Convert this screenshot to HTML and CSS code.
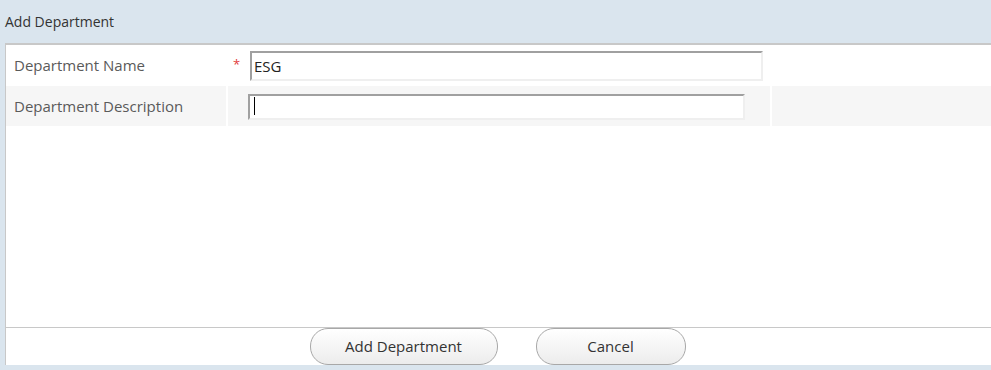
FILE: index.html
```html
<!DOCTYPE html>
<html>
<head>
  <meta charset="utf-8">
  <title>Add Department</title>
  <link rel="stylesheet" href="styles.css">
</head>
<body>
  <div class="dlg">
    <div class="dlg-title">Add Department</div>
    <div class="dlg-panel">
      <div class="frow row-a">
        <div class="lbl">Department Name</div>
        <div class="req">*</div>
        <div class="fld"><input type="text" class="txt txt-name" value="ESG"></div>
      </div>
      <div class="frow row-b">
        <div class="lbl">Department Description</div>
        <div class="fld"><input type="text" class="txt txt-desc"><span class="caret"></span></div>
        <div class="rest"></div>
      </div>
      <div class="spacer"></div>
      <div class="dlg-foot">
        <button class="pill pill-add">Add Department</button>
        <button class="pill pill-cancel">Cancel</button>
      </div>
    </div>
  </div>
</body>
</html>
```

FILE: styles.css
```css
*{
    box-sizing: border-box;
}

body{
    margin: 0;
    width: 991px;
    height: 370px;
    background-color: #dae5ee;
    font-family: "Open Sans", "Liberation Sans", sans-serif;
    overflow: hidden;
}

.dlg{
    display: flex;
    flex-direction: column;
    height: 365px;
}

.dlg-title{
    height: 43px;
    padding-left: 5px;
    line-height: 43px;
    font-size: 14px;
    color: #333;
}

.dlg-panel{
    flex: 1;
    display: flex;
    flex-direction: column;
    margin-left: 5px;
    background-color: #fff;
    border-top: 2px solid #c8c8c8;
    border-left: 1px solid #c8c8c8;
}

.frow{
    display: flex;
    align-items: stretch;
    height: 40px;
}

.row-b{
    margin-top: 1px;
    background-color: #f6f6f6;
}

.lbl{
    display: flex;
    align-items: center;
    padding-left: 8px;
    font-size: 15px;
    color: #5a5a5a;
}

.row-a .lbl{
    width: 222px;
}

.row-b .lbl{
    width: 222px;
    border-right: 2px solid #fff;
}

.req{
    width: 22px;
    padding: 10px 0 0 5px;
    color: #e23b3b;
    font-size: 13px;
}

.fld{
    display: flex;
    align-items: center;
    position: relative;
}

.row-b .fld{
    width: 544px;
    padding-left: 20px;
    border-right: 2px solid #fff;
}

.rest{
    flex: 1;
}

.txt{
    display: block;
    border-style: solid;
    border-width: 2px;
    border-color: #a0a0a0 #efefef #efefef #a0a0a0;
    background: #fff;
    font-family: inherit;
    font-size: 15px;
    color: #222;
    padding: 0 2px;
    outline: none;
}

.txt-name{
    width: 513px;
    height: 30px;
    margin-top: 1px;
}

.txt-desc{
    width: 497px;
    height: 26px;
    margin-top: 1px;
}

.caret{
    position: absolute;
    left: 26px;
    top: 11px;
    width: 1px;
    height: 18px;
    background: #000;
}

.spacer{
    flex: 1;
}

.dlg-foot{
    height: 38px;
    border-top: 1px solid #c8c8c8;
    display: flex;
    justify-content: center;
    gap: 38px;
    padding-right: 2px;
}

.pill{
    height: 37px;
    border: 1px solid #a8a8a8;
    border-radius: 18px;
    background: linear-gradient(#ffffff, #ececec);
    font-family: inherit;
    font-size: 15px;
    color: #333;
    padding: 0 0 1px;
}

.pill-add{
    width: 188px;
}

.pill-cancel{
    width: 150px;
}
```
